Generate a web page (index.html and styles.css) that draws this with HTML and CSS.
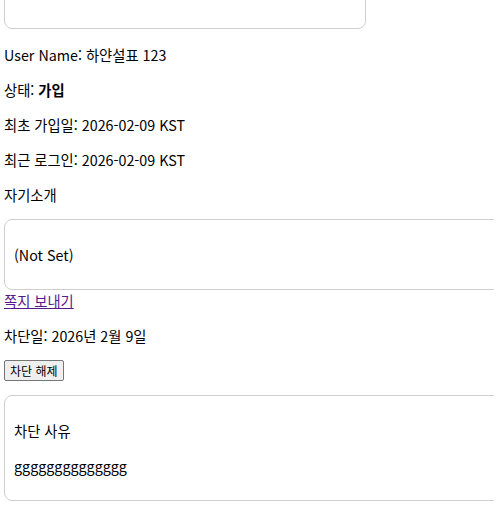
FILE: index.html
```html
<!DOCTYPE html>
<html lang="ko">
<head>
<meta charset="utf-8">
<title>User</title>
<link rel="stylesheet" href="styles.css">
</head>
<body>
<div class="page">
  <div class="card card-top">
    <p class="line">&nbsp;</p>
  </div>
  <p class="line">User Name: 하얀설표 123</p>
  <p class="line">상태: <b>가입</b></p>
  <p class="line">최초 가입일: 2026-02-09 KST</p>
  <p class="line">최근 로그인: 2026-02-09 KST</p>
  <p class="line">자기소개</p>
  <div class="card card-wide">
    <p class="line">(Not Set)</p>
  </div>
  <div class="link-row"><a class="msg-link" href="#">쪽지 보내기</a></div>
  <p class="line">차단일: 2026년 2월 9일</p>
  <p class="line"><button class="unblock" type="button">차단 해제</button></p>
  <div class="card card-wide">
    <p class="line">차단 사유</p>
    <p class="line">gggggggggggggg</p>
  </div>
</div>
</body>
</html>
```

FILE: styles.css
```css
html {
  overflow: hidden;
  background: #fff;
}

body {
  margin: 0 4px;
  font-family: "Noto Sans CJK KR", "Noto Sans", sans-serif;
  font-size: 14.3px;
  line-height: 21px;
  color: #000;
}

.page {
  margin-top: -40px;
}

.line {
  margin: 14px 0;
}

.card {
  border: 1px solid #cfcfcf;
  border-radius: 8px;
  padding: 0 9px;
  box-sizing: border-box;
}

.card::before,
.card::after {
  content: "";
  display: block;
  height: 10px;
}

.card-top {
  width: 362px;
  margin-bottom: 15px;
}

.card-top::after {
  height: 8px;
}

.card-wide {
  width: 560px;
}

.link-row {
  line-height: 21px;
}

.msg-link {
  color: #551a8b;
  text-decoration: underline;
}

.unblock {
  font-family: "Noto Sans CJK KR", sans-serif;
  font-size: 12px;
  line-height: 17px;
  height: 21px;
  padding: 1px 5px;
  margin: 0;
  color: #000;
  background: #efefef;
  border: 1px solid #767676;
  border-radius: 2px;
  vertical-align: top;
}
```
